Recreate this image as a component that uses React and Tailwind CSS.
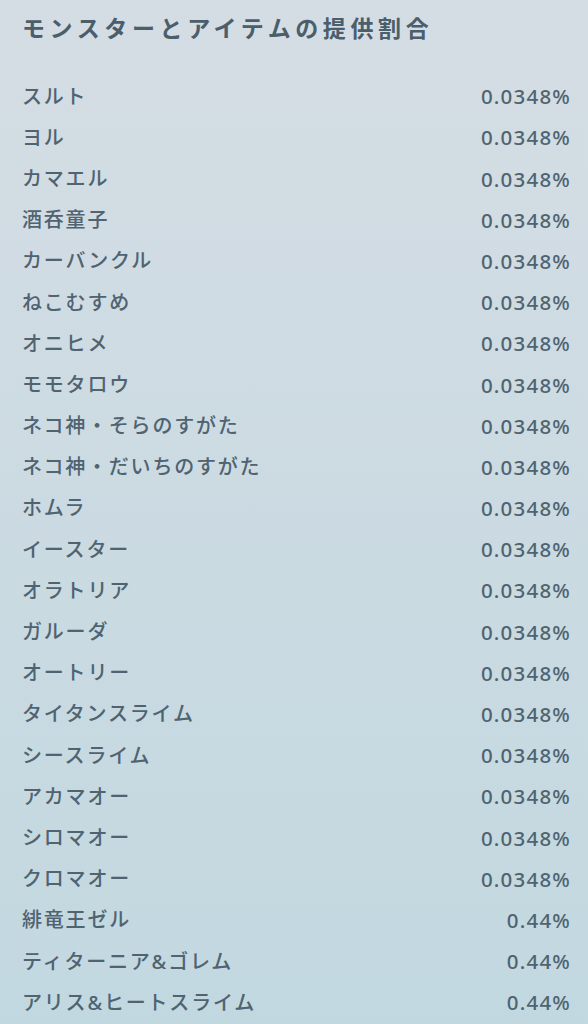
import React from "react";

const rows = [
  ["スルト", "0.0348%"],
  ["ヨル", "0.0348%"],
  ["カマエル", "0.0348%"],
  ["酒呑童子", "0.0348%"],
  ["カーバンクル", "0.0348%"],
  ["ねこむすめ", "0.0348%"],
  ["オニヒメ", "0.0348%"],
  ["モモタロウ", "0.0348%"],
  ["ネコ神・そらのすがた", "0.0348%"],
  ["ネコ神・だいちのすがた", "0.0348%"],
  ["ホムラ", "0.0348%"],
  ["イースター", "0.0348%"],
  ["オラトリア", "0.0348%"],
  ["ガルーダ", "0.0348%"],
  ["オートリー", "0.0348%"],
  ["タイタンスライム", "0.0348%"],
  ["シースライム", "0.0348%"],
  ["アカマオー", "0.0348%"],
  ["シロマオー", "0.0348%"],
  ["クロマオー", "0.0348%"],
  ["緋竜王ゼル", "0.44%"],
  ["ティターニア&ゴレム", "0.44%"],
  ["アリス&ヒートスライム", "0.44%"],
];

export default function App() {
  return (
    <div className="min-h-screen w-full bg-gradient-to-b from-[#d5dde4] to-[#c2d8e0] pl-[22px] pr-[17px] font-['Noto_Sans','Noto_Sans_CJK_JP',sans-serif] text-[#4f6371]">
      <h1 className="pt-[11px] h-[76px] text-[23px] leading-[34px] font-bold tracking-[4.6px] text-[#4a5e6b]">
        モンスターとアイテムの提供割合
      </h1>
      <div className="flex flex-col">
        {rows.map(([name, rate], i) => (
          <div key={i} className="flex h-[41.2px] items-center justify-between">
            <span className="text-[20px] font-medium tracking-[1.8px]">{name}</span>
            <span className="text-[20.5px] font-medium tracking-[1.2px]">{rate}</span>
          </div>
        ))}
      </div>
    </div>
  );
}
